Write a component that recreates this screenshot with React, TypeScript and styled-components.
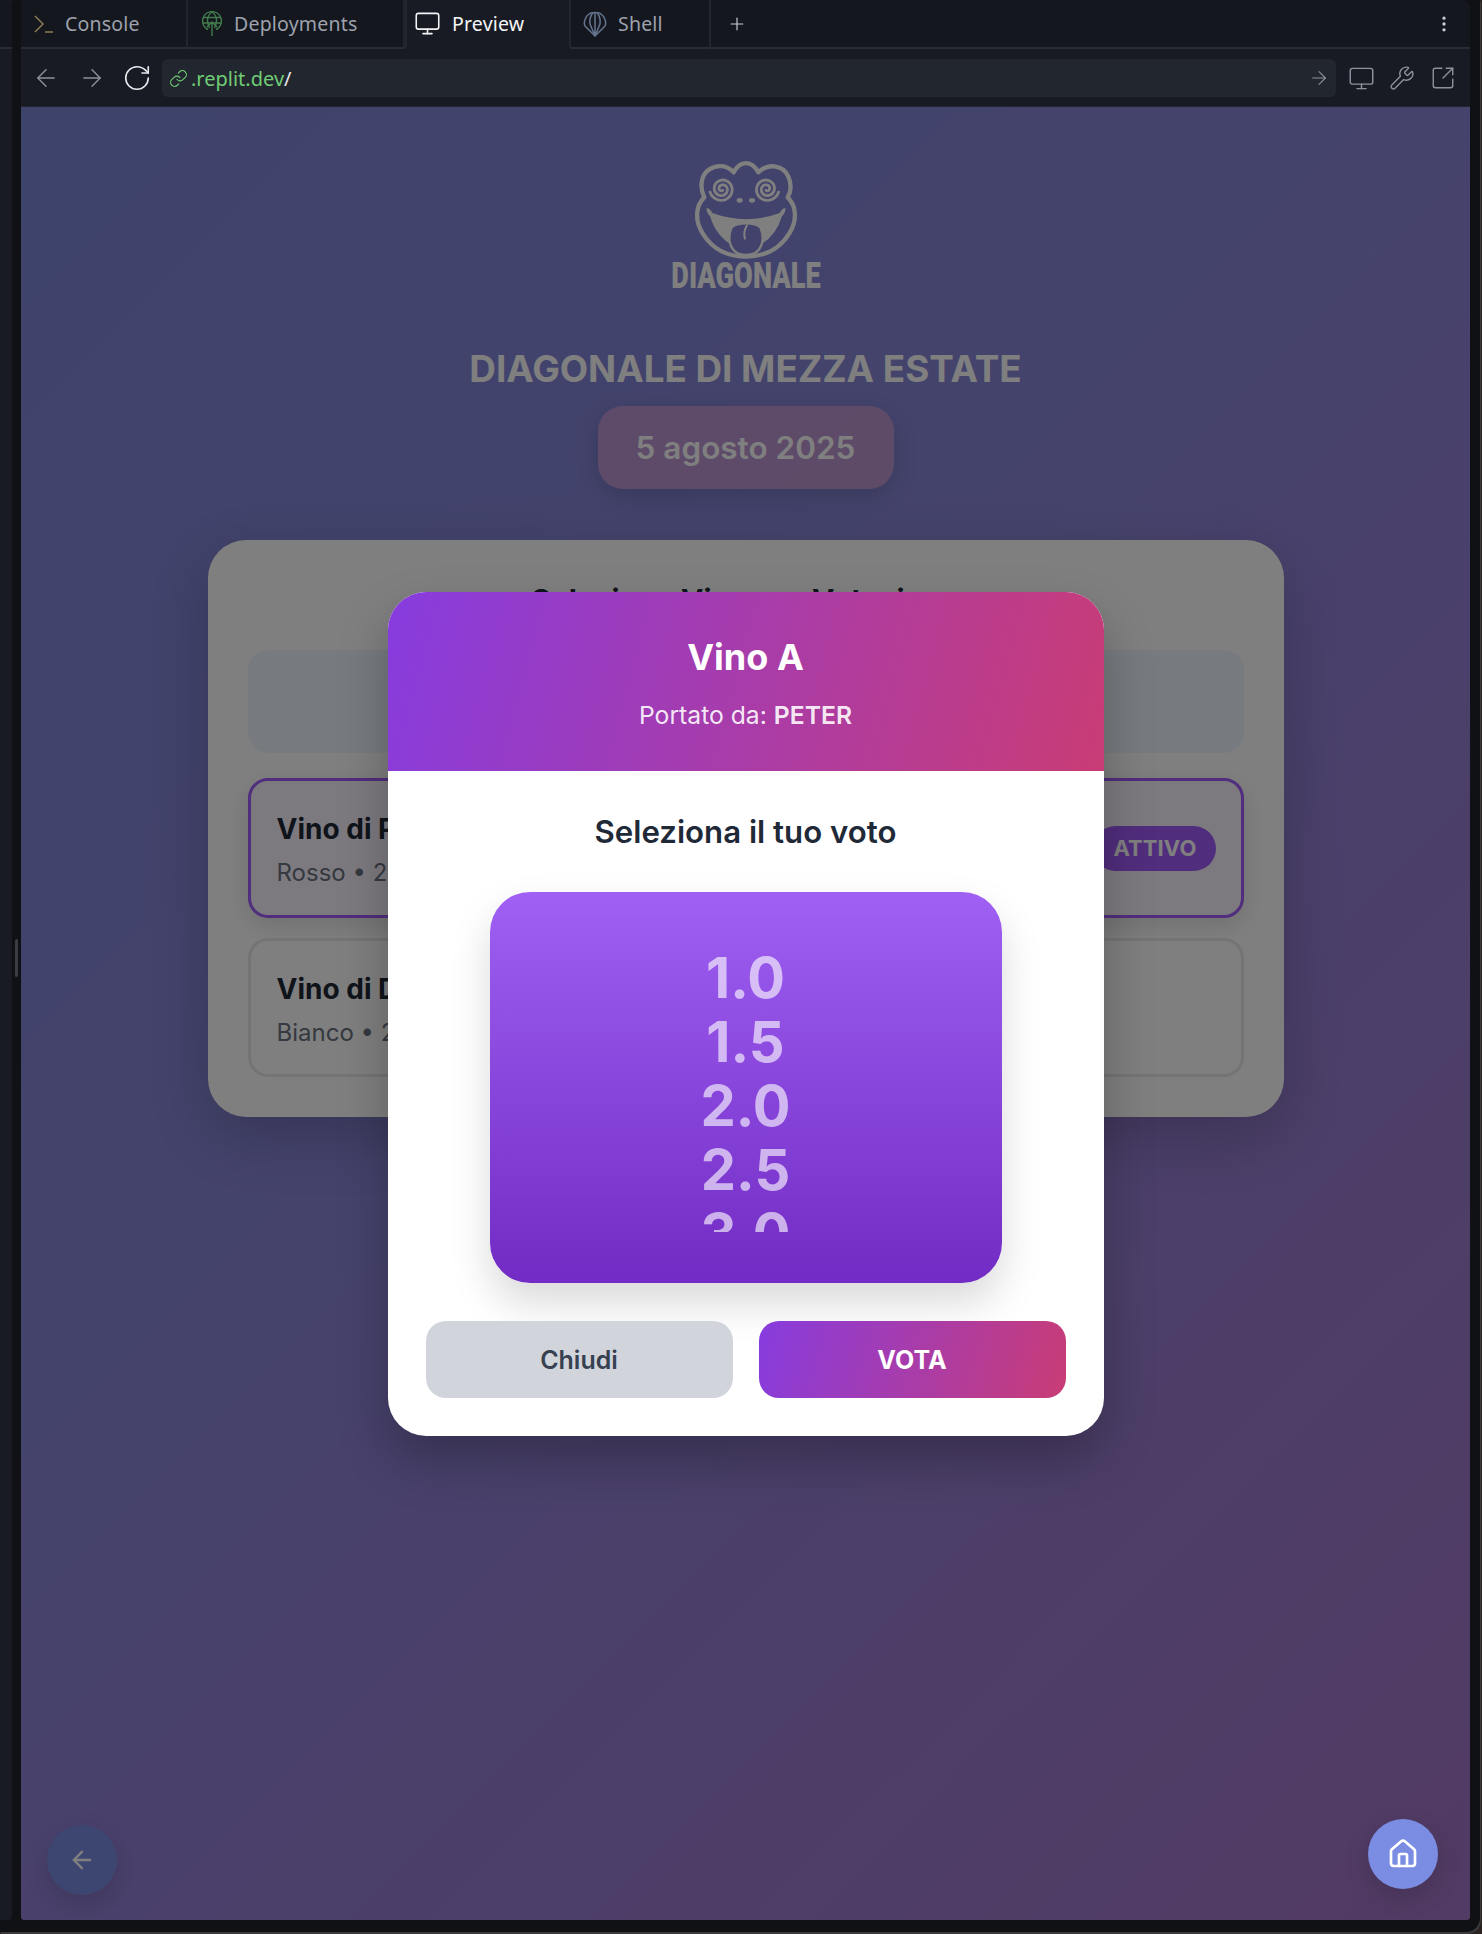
import React from "react";
import styled, { createGlobalStyle } from "styled-components";
import { ArrowLeft, ArrowRight, RotateCw, Link, Monitor, Wrench, SquareArrowOutUpRight, Plus, Home, EllipsisVertical } from "lucide-react";

const Global = createGlobalStyle`
  html, body { margin: 0; padding: 0; background: #2b2321; }
  body { font-family: Inter, "Noto Sans", sans-serif; width: 1482px; height: 1934px; overflow: hidden; }
  * { box-sizing: border-box; }
`;

const Win = styled.div`
  width: 1480px; height: 1932px; background: #101115; display: flex;
  border-bottom-right-radius: 14px; box-shadow: 1px 2px 0 #3a3a3c;
  overflow: hidden;
`;
const SidePanel = styled.aside`
  width: 12px; height: 1920px; background: #181b23; border-bottom-right-radius: 4px; flex: none;
  display: flex; flex-direction: column;
`;
const SideTop = styled.div`
  height: 49px; flex: none; background: #15171f; border-bottom: 2px solid #2a2c33; border-top-right-radius: 6px;
`;
const Handle = styled.div`
  width: 3px; height: 38px; background: #3a3d44; border-radius: 2px; margin: 890px 0 0 15px; flex: none;
`;
const Main = styled.div`
  width: 1449px; margin-left: 9px; height: 1920px; display: flex; flex-direction: column; flex: none;
`;
const TabBar = styled.nav`
  height: 49px; flex: none; background: #15171f; display: flex; align-items: stretch; position: relative;
  border-top-right-radius: 8px;
`;
const Tab = styled.div<{ $w: number; $active?: boolean; $pad: number }>`
  width: ${p => p.$w}px; padding-left: ${p => p.$pad}px; display: flex; align-items: center; gap: 11px;
  font-family: "Noto Sans", sans-serif; font-size: 19.5px; letter-spacing: .2px; color: ${p => (p.$active ? "#f4f5f7" : "#9da2ad")};
  background: ${p => (p.$active ? "#181b23" : "transparent")};
  border-right: 2px solid #23252c;
  border-left: ${p => (p.$active ? "2px solid #23252c" : "none")};
  border-bottom: 2px solid ${p => (p.$active ? "#181b23" : "#2a2c33")};
  flex: none;
`;
const TabFill = styled.div`
  flex: 1; display: flex; align-items: center; justify-content: space-between; padding: 0 16px 0 16px;
  border-bottom: 2px solid #2a2c33; color: #c9ccd2;
`;
const Toolbar = styled.div`
  height: 58px; flex: none; background: #181b23; display: flex; align-items: center; padding: 1px 16px 0 14px;
  color: #8d919a; border-bottom: 1px solid #24262d;
`;
const NavBtn = styled.span<{ $w: number; $color?: string }>`
  width: ${p => p.$w}px; display: flex; justify-content: center; color: ${p => p.$color || "#8d919a"}; flex: none;
  svg { flex: none; }
`;
const UrlBar = styled.div`
  margin-left: 0; width: 1174px; height: 38px; background: #22262e; border-radius: 6px; display: flex; align-items: center;
  padding: 0 6px 0 6px; font-family: "Noto Sans", sans-serif; font-size: 20px; color: #e6e7ea; flex: none;
`;
const UrlHost = styled.span`
  color: #70cc74; margin-left: 3px;
`;
const UrlGo = styled.span`
  margin-left: auto; display: flex; color: #8d919a;
`;

const Preview = styled.main`
  flex: 1; position: relative; overflow: hidden; border-radius: 0 0 4px 4px;
  background: linear-gradient(135deg, #7c86d8 0%, #8a86d8 44%, #9282d8 55%, #a476c8 100%);
  display: flex; flex-direction: column; align-items: center; padding-top: 33px;
`;
const Logo = styled.svg`
  width: 210px; height: 170px; flex: none; display: block;
`;
const EventTitle = styled.h1`
  margin: 37px 0 0; font-size: 36.8px; line-height: 44px; font-weight: 700; color: #fff; letter-spacing: 0;
`;
const DatePill = styled.div`
  margin-top: 15px; width: 296px; height: 83px; border-radius: 25px; background: linear-gradient(135deg, #bd96d6, #bd96d0);
  display: flex; align-items: center; justify-content: center; color: #fff; font-size: 31.5px; font-weight: 600;
  box-shadow: 0 8px 25px rgba(0,0,0,.15);
`;
const Card = styled.section`
  margin-top: 51px; width: 1076px; height: 577px; background: #fff; border-radius: 38px; padding: 40px;
  box-shadow: 0 20px 60px rgba(0,0,0,.2); display: flex; flex-direction: column;
`;
const CardTitle = styled.h2`
  margin: 0; height: 70px; text-align: center; font-size: 30px; line-height: 40px; font-weight: 700; color: #1f2937;
`;
const InfoBox = styled.div`
  height: 103px; background: #eff6ff; border-radius: 20px; flex: none; margin-bottom: 25px;
`;
const Row = styled.div<{ $active?: boolean }>`
  height: ${p => (p.$active ? 140 : 139)}px; flex: none; border-radius: 20px; padding: 0 25px 0 26px;
  border: 3px solid ${p => (p.$active ? "#a35bfb" : "#e8e9ec")};
  background: ${p => (p.$active ? "#faf5ff" : "#fff")};
  box-shadow: ${p => (p.$active ? "0 8px 25px rgba(0,0,0,.12)" : "none")};
  display: flex; align-items: center; justify-content: space-between;
  & + & { margin-top: 20px; }
`;
const RowText = styled.div`
  padding-top: 4px;
`;
const RowName = styled.div`
  font-size: 28px; line-height: 34px; font-weight: 700; color: #1f2937;
`;
const RowMeta = styled.div`
  margin-top: 12px; font-size: 24px; line-height: 30px; color: #6b7280;
`;
const Badge = styled.span`
  height: 45px; padding: 0 19px 0 20px; border-radius: 23px; background: #a35bfb; color: #fff; font-size: 22px; font-weight: 700;
  display: flex; align-items: center; letter-spacing: .1px;
`;
const FloatBtn = styled.button<{ $side: "left" | "right"; $bottom: number; $z: number; $icon: string }>`
  position: absolute; ${p => p.$side}: ${p => (p.$side === "left" ? 26 : 32)}px; bottom: ${p => p.$bottom}px;
  width: 70px; height: 70px; border-radius: 50%; border: none; background: #7b8de2; color: ${p => p.$icon};
  display: flex; align-items: center; justify-content: center; z-index: ${p => p.$z};
  box-shadow: 0 8px 25px rgba(0,0,0,.15);
`;
const Overlay = styled.div`
  position: absolute; inset: 0; background: rgba(0,0,0,.5); display: flex; align-items: center; justify-content: center; z-index: 5;
`;
const Modal = styled.div`
  width: 716px; height: 844px; background: #fff; border-radius: 38px; overflow: hidden; margin-top: 1px;
  box-shadow: 0 25px 50px rgba(0,0,0,.25); display: flex; flex-direction: column;
`;
const ModalHead = styled.header`
  height: 179px; flex: none; background: linear-gradient(105deg, #873cdf, #c93c75); color: #fff; text-align: center;
  display: flex; flex-direction: column; align-items: center; padding-top: 43px;
`;
const WineName = styled.h3`
  margin: 0; font-size: 36px; line-height: 44px; font-weight: 700;
`;
const Bringer = styled.p`
  margin: 21px 0 0; font-size: 24.7px; line-height: 30px; color: rgba(255,255,255,.9);
  strong { font-weight: 600; }
`;
const ModalBody = styled.div`
  flex: 1; padding: 42px 38px 38px; display: flex; flex-direction: column; align-items: center;
`;
const Prompt = styled.h4`
  margin: 0; font-size: 31.2px; line-height: 38px; font-weight: 600; color: #1f2937;
`;
const Picker = styled.div`
  margin-top: 41px; width: 512px; height: 391px; flex: none; border-radius: 40px;
  background: linear-gradient(180deg, #9f60f3, #722bc4); box-shadow: 0 20px 40px rgba(0,0,0,.15);
  padding: 54px 0 51px; display: flex; flex-direction: column; align-items: center;
`;
const Scroller = styled.div`
  height: 286px; width: 100%; overflow: hidden; text-align: center;
`;
const Score = styled.div`
  font-size: 56px; line-height: 64px; height: 64px; font-weight: 700; color: rgba(255,255,255,.62);
`;
const Actions = styled.div`
  margin-top: 38px; width: 100%; display: grid; grid-template-columns: 1fr 1fr; gap: 26px;
`;
const Btn = styled.button<{ $primary?: boolean }>`
  height: 77px; border: none; border-radius: 20px; font-family: inherit; font-size: 25px; font-weight: ${p => (p.$primary ? 700 : 600)};
  color: ${p => (p.$primary ? "#fff" : "#374151")};
  background: ${p => (p.$primary ? "linear-gradient(105deg, #873cdf, #c93c75)" : "#d1d5db")};
`;

const Spiral = ({ cx, cy, flip }: { cx: number; cy: number; flip?: boolean }) => {
  const pts: string[] = [];
  for (let i = 0; i <= 80; i++) {
    const a = (i / 80) * Math.PI * 4.6;
    const r = 4 + (i / 80) * 33;
    const x = cx + (flip ? -1 : 1) * r * Math.cos(a + 1);
    const y = cy + r * Math.sin(a + 1);
    pts.push(`${x.toFixed(1)},${y.toFixed(1)}`);
  }
  return <polyline points={pts.join(" ")} fill="none" stroke="#fff" strokeWidth="8.5" strokeLinecap="round" />;
};

const FrogLogo = () => (
  <Logo viewBox="0 0 630 510" aria-label="Diagonale">
    <path
      d="M278 97C298 60 332 60 352 97C378 70 425 72 442 110C453 135 448 158 440 172C466 197 470 240 445 280C415 330 365 350 315 350C265 350 215 330 185 280C160 240 164 197 190 172C176 145 178 105 205 88C230 72 258 76 278 97Z"
      fill="none" stroke="#fff" strokeWidth="13" strokeLinejoin="round"
    />
    <Spiral cx={243} cy={147} />
    <Spiral cx={377} cy={147} flip />
    <ellipse cx="296" cy="181" rx="9" ry="7" fill="#fff" />
    <ellipse cx="333" cy="181" rx="9" ry="7" fill="#fff" />
    <path d="M196 205Q206 203 214 219Q315 256 416 219Q424 203 434 205Q432 222 423 228Q405 290 352 318L278 318Q225 290 207 228Q198 222 196 205Z" fill="#fff" />
    <path d="M272 262C256 300 268 345 315 345C362 345 374 300 358 262C340 246 290 246 272 262Z" fill="#8684d8" stroke="#fff" strokeWidth="7" />
    <path d="M318 256C310 270 308 285 312 296" fill="none" stroke="#fff" strokeWidth="6" strokeLinecap="round" />
    <text x="315" y="444" textAnchor="middle" textLength="448" lengthAdjust="spacingAndGlyphs" fontFamily="Roboto, sans-serif" fontWeight="900" fontSize="108" fill="#fff">DIAGONALE</text>
  </Logo>
);

const ConsoleIcon = () => (
  <svg width="20" height="24" viewBox="0 0 20 24" fill="none" stroke="#8a7c50" strokeWidth="1.5">
    <path d="M1 4l8 8-8 8" />
    <path d="M11 20h8" />
  </svg>
);
const DeployIcon = () => (
  <svg width="22" height="26" viewBox="0 0 22 26" fill="none" stroke="#417c4c" strokeWidth="1.4">
    <path d="M7 18.5A9.4 9.4 0 1 1 15 18.5" />
    <path d="M11 1c-3 2-4.5 5-4.5 8.5S7.500 15 8.500 17M11 1c3 2 4.500 5 4.500 8.500s-1 5.500-2 7.500" />
    <path d="M2 6.500h18M1.500 12h19" />
    <path d="M11 25V11M6 16l5-5 5 5" />
  </svg>
);
const ShellIcon = () => (
  <svg width="24" height="26" viewBox="0 0 24 26" fill="none" stroke="#65758f" strokeWidth="1.5" strokeLinejoin="round">
    <path d="M12 25L2 15C0 11 3 5 6 3C8 1 16 1 18 3C21 5 24 11 22 15Z" />
    <path d="M12 25L7 13C6.500 9 8 4 10 1.500M12 25L17 13C17.500 9 16 4 14 1.500M12 25L12 1.500" />
  </svg>
);

const scores = ["1.0", "1.5", "2.0", "2.5", "3.0"];

export default function App() {
  return (
    <>
      <Global />
      <Win>
        <SidePanel>
          <SideTop />
          <Handle />
        </SidePanel>
        <Main>
          <TabBar>
            <Tab $w={167} $pad={13}><ConsoleIcon />Console</Tab>
            <Tab $w={217} $pad={13}><DeployIcon />Deployments</Tab>
            <Tab $w={166} $active $pad={7}><Monitor size={27} strokeWidth={1.4} />Preview</Tab>
            <Tab $w={140} $pad={12}><ShellIcon />Shell</Tab>
            <TabFill><Plus size={20} strokeWidth={1.4} /><EllipsisVertical size={20} strokeWidth={2} /></TabFill>
          </TabBar>
          <Toolbar>
            <NavBtn $w={22}><ArrowLeft size={28} strokeWidth={1.2} /></NavBtn>
            <NavBtn $w={70}><ArrowRight size={28} strokeWidth={1.2} /></NavBtn>
            <NavBtn $w={20} $color="#e8e9ec"><RotateCw size={30} strokeWidth={1.3} /></NavBtn>
            <NavBtn $w={15} />
            <UrlBar>
              <NavBtn $w={20} $color="#70cc74"><Link size={19} strokeWidth={1.4} /></NavBtn>
              <UrlHost>.replit.dev</UrlHost>/
              <UrlGo><ArrowRight size={22} strokeWidth={1.2} /></UrlGo>
            </UrlBar>
            <NavBtn $w={50}><Monitor size={27} strokeWidth={1.3} /></NavBtn>
            <NavBtn $w={32}><Wrench size={26} strokeWidth={1.3} /></NavBtn>
            <NavBtn $w={50}><SquareArrowOutUpRight size={26} strokeWidth={1.3} /></NavBtn>
          </Toolbar>
          <Preview>
            <FrogLogo />
            <EventTitle>DIAGONALE DI MEZZA ESTATE</EventTitle>
            <DatePill>5 agosto 2025</DatePill>
            <Card>
              <CardTitle>Seleziona Vino per Votazione</CardTitle>
              <InfoBox />
              <Row $active>
                <RowText>
                  <RowName>Vino di Peter</RowName>
                  <RowMeta>Rosso • 2 voti</RowMeta>
                </RowText>
                <Badge>ATTIVO</Badge>
              </Row>
              <Row>
                <RowText>
                  <RowName>Vino di Davide</RowName>
                  <RowMeta>Bianco • 2 voti</RowMeta>
                </RowText>
              </Row>
            </Card>
            <FloatBtn $side="left" $bottom={25} $z={1} $icon="#fff"><ArrowLeft size={28} strokeWidth={2} /></FloatBtn>
            <Overlay>
              <Modal>
                <ModalHead>
                  <WineName>Vino A</WineName>
                  <Bringer>Portato da: <strong>PETER</strong></Bringer>
                </ModalHead>
                <ModalBody>
                  <Prompt>Seleziona il tuo voto</Prompt>
                  <Picker>
                    <Scroller>
                      {scores.map(s => <Score key={s}>{s}</Score>)}
                    </Scroller>
                  </Picker>
                  <Actions>
                    <Btn>Chiudi</Btn>
                    <Btn $primary>VOTA</Btn>
                  </Actions>
                </ModalBody>
              </Modal>
            </Overlay>
            <FloatBtn $side="right" $bottom={31} $z={10} $icon="#fff"><Home size={32} strokeWidth={2} /></FloatBtn>
          </Preview>
        </Main>
      </Win>
    </>
  );
}
